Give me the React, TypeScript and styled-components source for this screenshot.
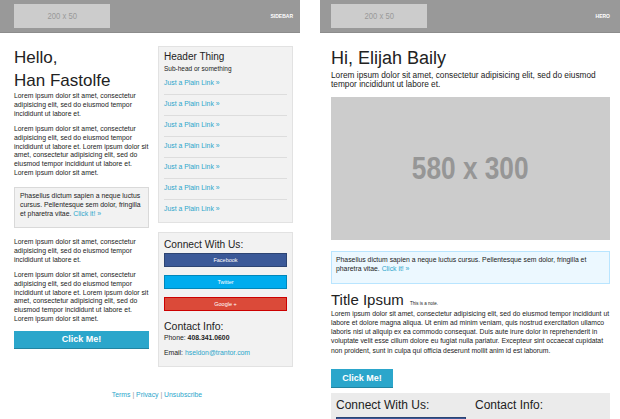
import styled, { createGlobalStyle } from "styled-components";

const GlobalStyle = createGlobalStyle`
  html, body {
    margin: 0;
    padding: 0;
    background: #ffffff;
  }
  body {
    font-family: "Liberation Sans", Arial, sans-serif;
    color: #222222;
  }
  h1, h2, h3, h4, p {
    margin: 0;
  }
`;

const Page = styled.div`
  display: flex;
  gap: 20px;
  width: 620px;
  height: 419px;
  overflow: hidden;
`;

const Email = styled.div`
  width: 300px;
  flex: none;
  display: flex;
  flex-direction: column;
`;

const TopBar = styled.div<{ $left: number; $right: number }>`
  height: 32px;
  flex: none;
  background: #999999;
  border-bottom: 1px solid #8c8c8c;
  display: flex;
  align-items: center;
  justify-content: space-between;
  padding: 0 ${(p) => p.$right}px 0 ${(p) => p.$left}px;
`;

const Logo = styled.div`
  width: 96px;
  height: 24px;
  background: #cccccc;
  color: #999999;
  display: flex;
  align-items: center;
  justify-content: center;
  font-size: 9px;
`;

/* placeholder captions use a condensed face; squeeze the sans to match */
const Narrow = styled.span<{ $scale: number }>`
  display: inline-block;
  transform: scaleX(${(p) => p.$scale});
`;

const BarLabel = styled.span`
  color: #ffffff;
  font-size: 5px;
  font-weight: bold;
  text-transform: uppercase;
`;

const Body = styled.div<{ $pad: string }>`
  padding: ${(p) => p.$pad};
`;

const TwoColumns = styled.div`
  display: grid;
  grid-template-columns: 135px 135px;
  column-gap: 9px;
  align-items: start;
`;

const Column = styled.div`
  display: flex;
  flex-direction: column;
`;

const Greeting = styled.h1<{ $size: number; $lh: number }>`
  font-weight: normal;
  font-size: ${(p) => p.$size}px;
  line-height: ${(p) => p.$lh}px;
  color: #222222;
`;

const Text = styled.p<{ $size?: number; $lh?: number; $mt?: number; $mb?: number }>`
  font-size: ${(p) => p.$size ?? 6.85}px;
  line-height: ${(p) => p.$lh ?? 8.9}px;
  margin-top: ${(p) => p.$mt ?? 0}px;
  margin-bottom: ${(p) => p.$mb ?? 0}px;
  color: #222222;
`;

const Link = styled.a`
  color: #2ba6cb;
  text-decoration: none;
`;

const Callout = styled.div<{ $tone: "gray" | "blue"; $mt: number; $mb: number }>`
  margin: ${(p) => p.$mt}px 0 ${(p) => p.$mb}px;
  padding: ${(p) => (p.$tone === "gray" ? "4px 5px 9px" : "3px 4px 9px")};
  background: ${(p) => (p.$tone === "gray" ? "#f2f2f2" : "#ecf8ff")};
  border: 1px solid ${(p) => (p.$tone === "gray" ? "#d9d9d9" : "#b9e5ff")};
`;

const CtaButton = styled.a<{ $width?: number; $height: number; $mt: number }>`
  display: flex;
  align-items: center;
  justify-content: center;
  box-sizing: border-box;
  width: ${(p) => (p.$width ? `${p.$width}px` : "100%")};
  height: ${(p) => p.$height}px;
  margin-top: ${(p) => p.$mt}px;
  background: #2ba6cb;
  border-bottom: 1px solid #2284a1;
  color: #ffffff;
  font-weight: bold;
  font-size: 9px;
  text-decoration: none;
`;

const Panel = styled.div<{ $pad: string; $mb?: number }>`
  background: #f2f2f2;
  border: 1px solid #e2e2e2;
  padding: ${(p) => p.$pad};
  margin-bottom: ${(p) => p.$mb ?? 0}px;
  display: flex;
  flex-direction: column;
`;

const PanelTitle = styled.h3<{ $size: number; $lh: number; $mt?: number; $mb?: number }>`
  font-weight: normal;
  font-size: ${(p) => p.$size}px;
  line-height: ${(p) => p.$lh}px;
  margin-top: ${(p) => p.$mt ?? 0}px;
  margin-bottom: ${(p) => p.$mb ?? 0}px;
  color: #222222;
`;

const SubHead = styled.p`
  font-size: 6.5px;
  line-height: 9px;
  margin: 2px 0 1.3px;
  color: #222222;
`;

const NavItem = styled.div`
  padding: 3.5px 0 7.5px;
  font-size: 6.85px;
  line-height: 9px;
  & + & {
    border-top: 1px solid #dddddd;
  }
`;

const networks = {
  facebook: { bg: "#3b5998", border: "#2d4473" },
  twitter: { bg: "#00acee", border: "#0087bb" },
  google: { bg: "#db4a39", border: "#cc0000" },
};

const SocialButton = styled.a<{ $network: keyof typeof networks }>`
  display: flex;
  align-items: center;
  justify-content: center;
  box-sizing: border-box;
  height: 14px;
  margin-bottom: 8px;
  background: ${(p) => networks[p.$network].bg};
  border: 1px solid ${(p) => networks[p.$network].border};
  color: #ffffff;
  font-size: 5.5px;
  text-decoration: none;
`;

const InfoLine = styled.p<{ $mb?: number }>`
  font-size: 6.85px;
  line-height: 9px;
  margin-bottom: ${(p) => p.$mb ?? 0}px;
  color: #222222;
`;

const Footer = styled.p`
  margin: 23px 7px 0 14px;
  text-align: center;
  font-size: 6.85px;
  line-height: 9px;
  color: #999999;
`;

const HeroImage = styled.div`
  margin-top: 7.5px;
  height: 143px;
  background: #cccccc;
  display: flex;
  align-items: center;
  justify-content: center;
  color: #969696;
  font-weight: bold;
  font-size: 32px;
`;

const Title = styled.h2`
  font-weight: normal;
  font-size: 15px;
  line-height: 18px;
  margin-top: 7px;
  color: #222222;
`;

const Note = styled.small`
  font-size: 4.5px;
  line-height: 1;
  margin-left: 2px;
`;

const BottomPanel = styled.div`
  margin-top: 5px;
  padding: 5.4px 5px 6px;
  background: #ebebeb;
  display: grid;
  grid-template-columns: 1fr 1fr;
  column-gap: 9px;
`;

function Sidebar() {
  const links = Array.from({ length: 7 });
  return (
    <Email>
      <TopBar $left={14} $right={7}>
        <Logo>
          <Narrow $scale={0.85}>200 x 50</Narrow>
        </Logo>
        <BarLabel>Sidebar</BarLabel>
      </TopBar>
      <Body $pad="13px 7px 0 14px">
        <TwoColumns>
          <Column>
            <Greeting $size={17} $lh={23}>
              Hello,
              <br />
              Han Fastolfe
            </Greeting>
            <Text $mb={6}>
              Lorem ipsum dolor sit amet, consectetur adipisicing elit, sed do eiusmod tempor
              incididunt ut labore et.
            </Text>
            <Text>
              Lorem ipsum dolor sit amet, consectetur adipisicing elit, sed do eiusmod tempor
              incididunt ut labore et. Lorem ipsum dolor sit amet, consectetur adipisicing elit,
              sed do eiusmod tempor incididunt ut labore et. Lorem ipsum dolor sit amet.
            </Text>
            <Callout $tone="gray" $mt={8.6} $mb={9.5}>
              <Text>
                Phasellus dictum sapien a neque luctus cursus. Pellentesque sem dolor, fringilla et
                pharetra vitae. <Link href="#">Click it! »</Link>
              </Text>
            </Callout>
            <Text $mb={6}>
              Lorem ipsum dolor sit amet, consectetur adipisicing elit, sed do eiusmod tempor
              incididunt ut labore et.
            </Text>
            <Text>
              Lorem ipsum dolor sit amet, consectetur adipisicing elit, sed do eiusmod tempor
              incididunt ut labore et. Lorem ipsum dolor sit amet, consectetur adipisicing elit,
              sed do eiusmod tempor incididunt ut labore et. Lorem ipsum dolor sit amet.
            </Text>
            <CtaButton href="#" $height={18} $mt={6.4}>
              Click Me!
            </CtaButton>
          </Column>
          <Column>
            <Panel $pad="4px 5px 1.7px" $mb={9}>
              <PanelTitle $size={10} $lh={11}>
                Header Thing
              </PanelTitle>
              <SubHead>Sub-head or something</SubHead>
              {links.map((_, i) => (
                <NavItem key={i}>
                  <Link href="#">Just a Plain Link »</Link>
                </NavItem>
              ))}
            </Panel>
            <Panel $pad="5px 5px 9px">
              <PanelTitle $size={10.2} $lh={13} $mb={2}>
                Connect With Us:
              </PanelTitle>
              <SocialButton href="#" $network="facebook">
                Facebook
              </SocialButton>
              <SocialButton href="#" $network="twitter">
                Twitter
              </SocialButton>
              <SocialButton href="#" $network="google">
                Google +
              </SocialButton>
              <PanelTitle $size={10.5} $lh={13} $mt={1} $mb={0.5}>
                Contact Info:
              </PanelTitle>
              <InfoLine $mb={5.7}>
                Phone: <b>408.341.0600</b>
              </InfoLine>
              <InfoLine>
                Email: <Link href="#">hseldon@trantor.com</Link>
              </InfoLine>
            </Panel>
          </Column>
        </TwoColumns>
        <Footer>
          <Link href="#">Terms</Link> | <Link href="#">Privacy</Link> |{" "}
          <Link href="#">Unsubscribe</Link>
        </Footer>
      </Body>
    </Email>
  );
}

function Hero() {
  return (
    <Email>
      <TopBar $left={11} $right={10}>
        <Logo>
          <Narrow $scale={0.85}>200 x 50</Narrow>
        </Logo>
        <BarLabel>Hero</BarLabel>
      </TopBar>
      <Body $pad="14.3px 10px 0 11px">
        <Greeting $size={18} $lh={22}>
          Hi, Elijah Baily
        </Greeting>
        <Text $size={8.3} $lh={9} $mt={2.2}>
          Lorem ipsum dolor sit amet, consectetur adipisicing elit, sed do eiusmod tempor
          incididunt ut labore et.
        </Text>
        <HeroImage>
          <Narrow $scale={0.82}>580 x 300</Narrow>
        </HeroImage>
        <Callout $tone="blue" $mt={11} $mb={0}>
          <Text $lh={9.3}>
            Phasellus dictum sapien a neque luctus cursus. Pellentesque sem dolor, fringilla et
            pharetra vitae. <Link href="#">Click it! »</Link>
          </Text>
        </Callout>
        <Title>
          Title Ipsum <Note>This is a note.</Note>
        </Title>
        <Text $size={6.8} $lh={9.25}>
          Lorem ipsum dolor sit amet, consectetur adipisicing elit, sed do eiusmod tempor
          incididunt ut labore et dolore magna aliqua. Ut enim ad minim veniam, quis nostrud
          exercitation ullamco laboris nisi ut aliquip ex ea commodo consequat. Duis aute irure
          dolor in reprehenderit in voluptate velit esse cillum dolore eu fugiat nulla pariatur.
          Excepteur sint occaecat cupidatat non proident, sunt in culpa qui officia deserunt mollit
          anim id est laborum.
        </Text>
        <CtaButton href="#" $width={62} $height={19} $mt={14}>
          Click Me!
        </CtaButton>
        <BottomPanel>
          <Column>
            <PanelTitle $size={12} $lh={14} $mb={4.3}>
              Connect With Us:
            </PanelTitle>
            <SocialButton href="#" $network="facebook">
              Facebook
            </SocialButton>
            <SocialButton href="#" $network="twitter">
              Twitter
            </SocialButton>
            <SocialButton href="#" $network="google">
              Google +
            </SocialButton>
          </Column>
          <Column>
            <PanelTitle $size={12} $lh={14} $mb={4.3}>
              Contact Info:
            </PanelTitle>
            <InfoLine $mb={5.7}>
              Phone: <b>408.341.0600</b>
            </InfoLine>
            <InfoLine>
              Email: <Link href="#">hseldon@trantor.com</Link>
            </InfoLine>
          </Column>
        </BottomPanel>
      </Body>
    </Email>
  );
}

export default function App() {
  return (
    <>
      <GlobalStyle />
      <Page>
        <Sidebar />
        <Hero />
      </Page>
    </>
  );
}
